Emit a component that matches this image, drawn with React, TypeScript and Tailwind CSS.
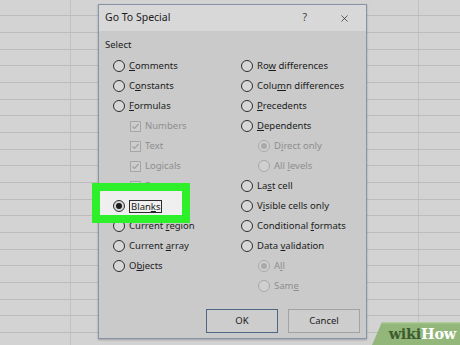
import { X } from "lucide-react";

type Item = {
  label: string;
  u: number; // index of the underlined access key
  kind: "radio" | "check";
  indent?: boolean;
  checked?: boolean;
  disabled?: boolean;
  hilite?: boolean;
};

const leftItems: Item[] = [
  { label: "Comments", u: 0, kind: "radio" },
  { label: "Constants", u: 1, kind: "radio" },
  { label: "Formulas", u: 0, kind: "radio" },
  { label: "Numbers", u: -1, kind: "check", indent: true, checked: true, disabled: true },
  { label: "Text", u: -1, kind: "check", indent: true, checked: true, disabled: true },
  { label: "Logicals", u: -1, kind: "check", indent: true, checked: true, disabled: true },
  { label: "Errors", u: -1, kind: "check", indent: true, checked: true, disabled: true },
  { label: "Blanks", u: 4, kind: "radio", checked: true, hilite: true },
  { label: "Current region", u: 8, kind: "radio" },
  { label: "Current array", u: 8, kind: "radio" },
  { label: "Objects", u: 1, kind: "radio" },
];

const rightItems: Item[] = [
  { label: "Row differences", u: 2, kind: "radio" },
  { label: "Column differences", u: 4, kind: "radio" },
  { label: "Precedents", u: 0, kind: "radio" },
  { label: "Dependents", u: 0, kind: "radio" },
  { label: "Direct only", u: 1, kind: "radio", indent: true, checked: true, disabled: true },
  { label: "All levels", u: 4, kind: "radio", indent: true, disabled: true },
  { label: "Last cell", u: 2, kind: "radio" },
  { label: "Visible cells only", u: 1, kind: "radio" },
  { label: "Conditional formats", u: 12, kind: "radio" },
  { label: "Data validation", u: 5, kind: "radio" },
  { label: "All", u: 1, kind: "radio", indent: true, checked: true, disabled: true },
  { label: "Same", u: 3, kind: "radio", indent: true, disabled: true },
];

function Radio({ checked, disabled }: { checked?: boolean; disabled?: boolean }) {
  return (
    <span
      className={`flex h-[12px] w-[12px] shrink-0 items-center justify-center rounded-full border ${
        disabled ? "border-[#a8a8a8] bg-[#d0d0d0]" : "border-[#2e2e2e] bg-[#d7d7d7]"
      }`}
    >
      {checked && (
        <span className={`h-[6px] w-[6px] rounded-full ${disabled ? "bg-[#a9a9a9]" : "bg-[#1b1b1b]"}`} />
      )}
    </span>
  );
}

function Check() {
  return (
    <span className="flex h-[11px] w-[11px] shrink-0 items-center justify-center border border-[#a6a6a6] bg-[#cdcdcd]">
      <svg width="9" height="9" viewBox="0 0 9 9">
        <polyline points="1.5,4.5 3.5,6.5 7.5,2" fill="none" stroke="#a2a2a2" strokeWidth="1.2" />
      </svg>
    </span>
  );
}

function Label({ text, u }: { text: string; u: number }) {
  if (u < 0) return <>{text}</>;
  return (
    <>
      {text.slice(0, u)}
      <span className="underline underline-offset-[1px]">{text[u]}</span>
      {text.slice(u + 1)}
    </>
  );
}

function Row({ item }: { item: Item }) {
  return (
    <div
      className={`flex h-[20px] items-center gap-[4px] ${item.indent ? "pl-[17px]" : ""} ${
        item.hilite ? "relative" : ""
      }`}
    >
      {item.hilite && (
        <span className="absolute -left-[21px] top-[-13px] z-0 h-[40px] w-[98px] border-[8px] border-[#2ef02a] bg-[#efefef]" />
      )}
      <span className={`flex items-center gap-[4px] ${item.hilite ? "relative z-10" : ""}`}>
        {item.kind === "radio" ? <Radio checked={item.checked} disabled={item.disabled} /> : <Check />}
        <span
          className={`whitespace-nowrap ${item.disabled ? "text-[#8e8e8e]" : "text-[#1c1c1c]"} ${
            item.hilite ? "border border-[#2a2a2a] px-[1px] leading-[11px]" : ""
          }`}
        >
          <Label text={item.label} u={item.u} />
        </span>
      </span>
    </div>
  );
}

const rows = Array.from({ length: 21 }, (_, i) => i);

export default function App() {
  return (
    <div className="relative h-[345px] w-[460px] overflow-hidden bg-[#d3d3d3] font-['Noto_Sans',sans-serif] text-[9.5px]">
      {/* spreadsheet behind */}
      <div className="flex flex-col">
        {rows.map((i) => (
          <div
            key={i}
            className={`flex border-b border-[#bcbcbc] ${i % 3 === 0 ? "h-[16px]" : "h-[17px]"}`}
          >
            <div className="w-[71px] border-r border-[#c2c2c2]" />
            <div className="w-[348px] border-r border-[#c2c2c2]" />
            <div className="flex-1" />
          </div>
        ))}
      </div>

      {/* dialog */}
      <div className="absolute left-[98px] top-[4px] flex h-[335px] w-[269px] flex-col border border-[#8793a8] shadow-[0_1px_2px_rgba(0,0,0,0.25)]">
        <div className="flex h-[26px] items-center bg-[#d8d8d8] pl-[6px] pr-[16px] text-[10.5px] text-[#1c1c1c]">
          <span className="flex-1">Go To Special</span>
          <span className="mr-[32px] text-[#444]">?</span>
          <X size={11} strokeWidth={1.5} className="text-[#222]" />
        </div>
        <div className="flex flex-1 flex-col bg-[#cacaca]">
          <div className="pl-[6px] pt-[7px] leading-[14px] text-[#1c1c1c]">Select</div>
          <div className="mt-[4px] grid grid-cols-[128px_1fr] pl-[14px]">
            <div className="flex flex-col">
              {leftItems.map((it) => (
                <Row key={it.label} item={it} />
              ))}
            </div>
            <div className="flex flex-col">
              {rightItems.map((it) => (
                <Row key={it.label} item={it} />
              ))}
            </div>
          </div>
          <div className="mt-auto flex justify-end gap-[10px] pb-[5px] pr-[6px]">
            <button className="flex h-[24px] w-[72px] items-center justify-center border border-[#4f6684] bg-[#cdcdcd] text-[#1c1c1c]">
              OK
            </button>
            <button className="flex h-[24px] w-[72px] items-center justify-center border border-[#a3a3a3] bg-[#cdcdcd] text-[#1c1c1c]">
              Cancel
            </button>
          </div>
        </div>
      </div>

      {/* wikiHow mark */}
      <div className="absolute bottom-0 right-0 h-[23px] w-[88px]">
        <svg className="absolute inset-0" width="88" height="23" viewBox="0 0 88 23">
          <polygon points="10,0 88,0 88,23 0,23" fill="#93b67a" />
          <polygon points="10,0 88,0 88,1.5 9,1.5" fill="#b0cb9b" />
        </svg>
        <div className="relative flex h-full items-center justify-end pr-[4px] pt-[2px] font-['DejaVu_Serif',serif] text-[14.5px] font-bold leading-none tracking-[-0.3px]">
          <span className="text-[#3d5c2f]">wiki</span>
          <span className="text-white">How</span>
        </div>
      </div>
    </div>
  );
}
